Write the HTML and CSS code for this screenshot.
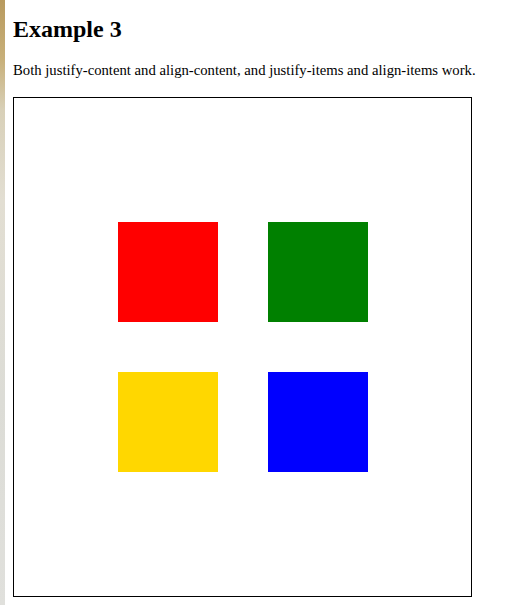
FILE: index.html
```html
<!DOCTYPE html>
<html>
<head>
<meta charset="utf-8">
<link rel="stylesheet" href="styles.css">
</head>
<body>
<div class="strip"></div>
<main class="page">
  <h2 class="title">Example 3</h2>
  <p class="lead">Both justify-content and align-content, and justify-items and align-items work.</p>
  <div class="grid">
    <div class="cell red"></div>
    <div class="cell green"></div>
    <div class="cell yellow"></div>
    <div class="cell blue"></div>
  </div>
</main>
</body>
</html>
```
FILE: styles.css
```css
html, body {
  margin: 0;
  padding: 0;
  background: #fff;
}
body {
  display: flex;
  font-family: "Liberation Serif", "Times New Roman", serif;
  color: #000;
}
.strip {
  width: 5px;
  flex: none;
  min-height: 605px;
  background: linear-gradient(to bottom, #b89a5e 0px, #c8b07a 60px, #d8d0b8 110px, #e2ded2 200px, #dcdcd6 400px, #e0e0dc 605px);
}
.page {
  padding: 0 8px;
}
.title {
  font-size: 24px;
  font-weight: bold;
  margin: 15px 0 0 0;
  line-height: 28px;
}
.lead {
  font-size: 14.7px;
  margin: 19px 0 0 0;
  line-height: 17px;
}
.grid {
  margin-top: 18px;
  width: 456px;
  height: 498px;
  padding-left: 1px;
  border: 1px solid #000;
  display: grid;
  grid-template-columns: 100px 100px;
  grid-template-rows: 100px 100px;
  gap: 50px;
  justify-content: center;
  align-content: center;
  justify-items: center;
  align-items: center;
}
.cell {
  width: 100px;
  height: 100px;
}
.red { background: #ff0000; }
.green { background: #008000; }
.yellow { background: #ffd700; }
.blue { background: #0000ff; }
```
